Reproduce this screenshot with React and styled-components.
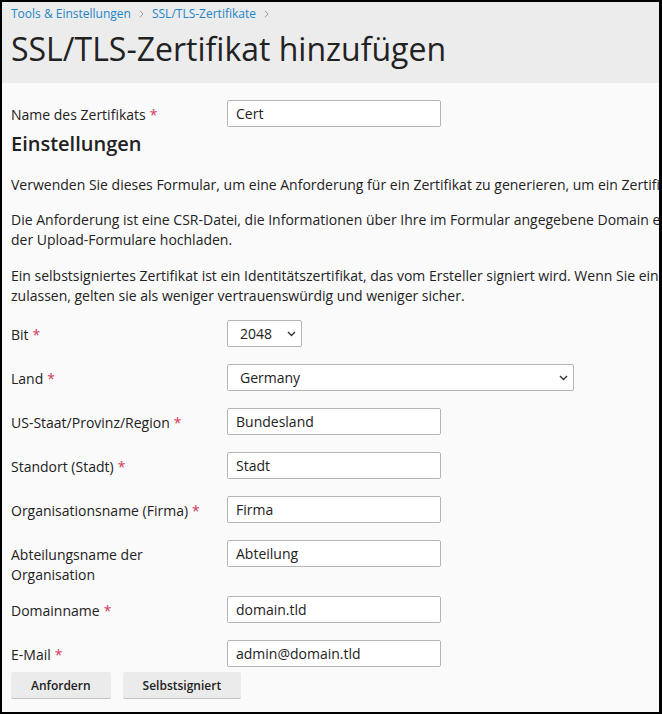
import React from "react";
import styled, { createGlobalStyle } from "styled-components";

const Global = createGlobalStyle`
  html, body { margin: 0; padding: 0; background: #ffffff; }
  body { font-family: "Open Sans", "Noto Sans", sans-serif; color: #222222; }
  * { box-sizing: border-box; }
`;

const Frame = styled.div`
  width: 662px;
  height: 714px;
  border: 2px solid #000;
  border-right-width: 3px;
  background: #fafafa;
  overflow: hidden;
`;

const Header = styled.header`
  background: #ececec;
  padding: 4px 9px 14px;
`;

const Crumbs = styled.nav`
  display: flex;
  align-items: center;
  font-size: 12px;
  line-height: 16px;
  margin-bottom: 7px;
`;

const Crumb = styled.a`
  color: #1f86c7;
  text-decoration: none;
`;

const Sep = styled.svg`
  width: 5px;
  height: 8px;
  margin: 0 8px 0 8px;
  flex: none;
`;

const Title = styled.h1`
  margin: 0;
  font-size: 32px;
  line-height: 40px;
  font-weight: 400;
  color: #222;
  white-space: nowrap;
`;

const Content = styled.main`
  padding: 17px 9px 0;
  font-size: 14px;
  line-height: 20px;
`;

const Row = styled.div`
  display: flex;
  align-items: flex-start;
`;

const Label = styled.div`
  width: 216px;
  flex: none;
  padding: 5px 20px ${(p) => (p.$tail ? 3 : 11)}px 0;
  color: #222;
`;

const Req = styled.span`
  color: #d3365a;
  margin-left: 4px;
`;

const Field = styled.div`
  padding-bottom: ${(p) => (p.$tail ? 5 : 17)}px;
`;

const Input = styled.input`
  display: block;
  width: ${(p) => p.$w || 214}px;
  height: 27px;
  padding: 0 8px;
  border: 1px solid #b5b5b5;
  border-radius: 2px;
  background: #fff;
  font-family: inherit;
  font-size: 14px;
  color: #222;
  outline: none;
`;

const SelectWrap = styled.div`
  position: relative;
  width: ${(p) => p.$w}px;
`;

const Select = styled.select`
  appearance: none;
  -webkit-appearance: none;
  display: block;
  width: 100%;
  height: 27px;
  padding: 0 24px 0 12px;
  border: 1px solid #b5b5b5;
  border-radius: 2px;
  background: #fff;
  font-family: inherit;
  font-size: 14px;
  color: #222;
  outline: none;
`;

const Chevron = styled.svg`
  position: absolute;
  right: 6px;
  top: 11px;
  width: 9px;
  height: 6px;
  pointer-events: none;
`;

const Heading = styled.h3`
  margin: 0 0 19px;
  font-size: 20px;
  line-height: 24px;
  font-weight: 600;
  color: #222;
`;

const Para = styled.p`
  margin: 0 0 ${(p) => p.$gap || 16}px;
  white-space: nowrap;
  color: #222;
`;

const Fields = styled.div`
  margin-top: 0;
`;

const Actions = styled.div`
  display: flex;
  gap: 12px;
`;

const Button = styled.button`
  height: 27px;
  padding: 0 20px;
  border: none;
  border-bottom: 1px solid #c3c3c3;
  border-radius: 2px;
  background: #ebebeb;
  font-family: inherit;
  font-size: 12px;
  font-weight: 600;
  color: #222;
`;

const Arrow = () => (
  <Sep viewBox="0 0 5 8">
    <path d="M1 0.8 L4 4 L1 7.2" fill="none" stroke="#9a9a9a" strokeWidth="1" />
  </Sep>
);

const Down = () => (
  <Chevron viewBox="0 0 9 6">
    <path d="M1 1 L4.5 4.5 L8 1" fill="none" stroke="#333" strokeWidth="1.4" />
  </Chevron>
);

const TextRow = ({ label, req, value, tail, w }) => (
  <Row>
    <Label $tail={tail}>
      {label}
      {req && <Req>*</Req>}
    </Label>
    <Field $tail={tail}>
      <Input defaultValue={value} $w={w} />
    </Field>
  </Row>
);

const SelectRow = ({ label, value, options, w }) => (
  <Row>
    <Label>
      {label}
      <Req>*</Req>
    </Label>
    <Field>
      <SelectWrap $w={w}>
        <Select defaultValue={value}>
          {options.map((o) => (
            <option key={o}>{o}</option>
          ))}
        </Select>
        <Down />
      </SelectWrap>
    </Field>
  </Row>
);

export default function App() {
  return (
    <>
      <Global />
      <Frame>
        <Header>
          <Crumbs>
            <Crumb href="#">Tools &amp; Einstellungen</Crumb>
            <Arrow />
            <Crumb href="#">SSL/TLS-Zertifikate</Crumb>
            <Arrow />
          </Crumbs>
          <Title>SSL/TLS-Zertifikat hinzufügen</Title>
        </Header>
        <Content>
          <TextRow label="Name des Zertifikats" req value="Cert" tail />
          <Heading>Einstellungen</Heading>
          <Para $gap={15}>
            Verwenden Sie dieses Formular, um eine Anforderung für ein Zertifikat zu generieren, um ein Zertifikat zu kaufen oder ein selbstsigniertes Zertifikat zu erstellen.
          </Para>
          <Para>
            Die Anforderung ist eine CSR-Datei, die Informationen über Ihre im Formular angegebene Domain enthält.
            <br />
            der Upload-Formulare hochladen.
          </Para>
          <Para $gap={14}>
            Ein selbstsigniertes Zertifikat ist ein Identitätszertifikat, das vom Ersteller signiert wird. Wenn Sie ein solches Zertifikat
            <br />
            zulassen, gelten sie als weniger vertrauenswürdig und weniger sicher.
          </Para>
          <Fields>
            <SelectRow label="Bit" value="2048" options={["1024", "2048", "4096"]} w={75} />
            <SelectRow label="Land" value="Germany" options={["Austria", "Germany", "Switzerland"]} w={347} />
            <TextRow label="US-Staat/Provinz/Region" req value="Bundesland" />
            <TextRow label="Standort (Stadt)" req value="Stadt" />
            <TextRow label="Organisationsname (Firma)" req value="Firma" />
            <TextRow label="Abteilungsname der Organisation" value="Abteilung" />
            <TextRow label="Domainname" req value="domain.tld" />
            <TextRow label="E-Mail" req value="admin@domain.tld" tail />
          </Fields>
          <Actions>
            <Button>Anfordern</Button>
            <Button>Selbstsigniert</Button>
          </Actions>
        </Content>
      </Frame>
    </>
  );
}
